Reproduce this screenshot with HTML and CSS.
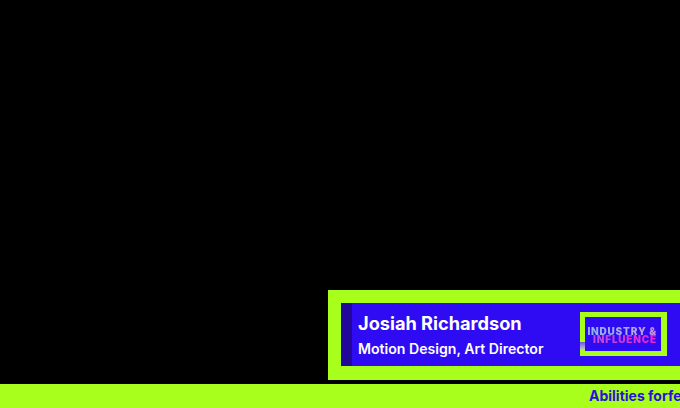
FILE: index.html
```html
<!DOCTYPE html>
<html lang="en">
<head>
    <meta charset="UTF-8">
    <meta name="viewport" content="width=device-width, initial-scale=1.0">
    <title>Industry & Influence</title>
    <link rel="stylesheet" href="styles.css">
</head>
<body>
    <div class="lower-third">
        <div class="card">
            <div class="card-text">
                <div class="name">Josiah Richardson</div>
                <div class="role">Motion Design, Art Director</div>
            </div>
            <div class="logo">
                <div class="logo-text">INDUSTRY &amp;<br>INFLUENCE</div>
                <span class="logo-notch"></span>
            </div>
        </div>
    </div>
    <div class="ticker">
        <span class="ticker-text">Abilities forfeited</span>
    </div>
</body>
</html>
```

FILE: styles.css
```css
* {
    box-sizing: border-box;
}

body {
    margin: 0;
    height: 100vh;
    background: #000;
    font-family: Inter, 'Liberation Sans', sans-serif;
    display: flex;
    flex-direction: column;
    justify-content: flex-end;
    overflow: hidden;
}

.lower-third {
    align-self: flex-end;
    width: 352px;
    height: 90px;
    margin-bottom: 4px;
    background: #a8ff1c;
    padding: 13px 0 14px 13px;
}

.card {
    height: 100%;
    background: #2f0bf4;
    border-left: 11px solid #23069a;
    display: flex;
    align-items: center;
    justify-content: space-between;
    padding: 0 13px 0 6px;
    color: #fff;
}

.card-text {
    margin-top: 2px;
}

.name {
    font-size: 18.2px;
    font-weight: 700;
    line-height: 22px;
    margin-bottom: 5px;
}

.role {
    font-size: 14.1px;
    font-weight: 600;
    line-height: 20px;
}

.logo {
    position: relative;
    width: 87px;
    height: 44px;
    margin-bottom: 1px;
    border: 5px solid #a8ff1c;
    border-right-width: 6px;
    padding: 1px 4px 0 0;
    display: flex;
    align-items: center;
    justify-content: flex-end;
}

.logo-text {
    font-size: 10px;
    font-weight: 900;
    letter-spacing: 0.8px;
    line-height: 8px;
    text-align: right;
    white-space: nowrap;
    color: transparent;
    background:
        linear-gradient(90deg, #8cb4ea, #b0a8e8 65%, #d08cd8) top / 100% 50% no-repeat,
        linear-gradient(90deg, #b850e0, #f020d0) bottom / 100% 50% no-repeat;
    -webkit-background-clip: text;
    background-clip: text;
    filter: blur(0.4px);
}

.logo-notch {
    position: absolute;
    left: -5px;
    bottom: 1px;
    width: 5px;
    height: 8px;
    background: linear-gradient(180deg, #6a55e8, #c8c8d0);
}

.ticker {
    height: 24px;
    background: #a8ff1c;
    padding-left: 589px;
    white-space: nowrap;
    overflow: hidden;
    color: #2a10d8;
    font-size: 14px;
    font-weight: 700;
    line-height: 24px;
}
```
